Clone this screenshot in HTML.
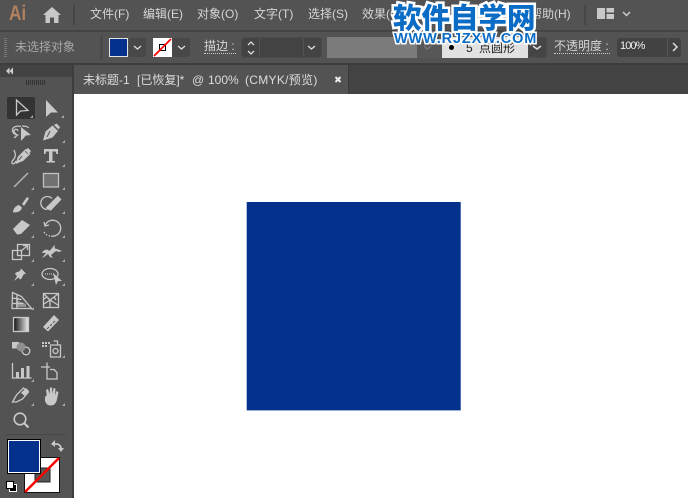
<!DOCTYPE html>
<html><head><meta charset="utf-8"><style>
html,body{margin:0;padding:0}
#p{position:relative;width:688px;height:498px;overflow:hidden;background:#535353;font-family:"Liberation Sans","Noto Sans CJK SC",sans-serif;font-size:12px;color:#d6d6d6}
#p div{position:absolute}
.t{white-space:nowrap;line-height:16px}
svg{position:absolute;left:0;top:0}
</style></head><body><div id="p">
<div style="left:0;top:30px;width:688px;height:2px;background:#444"></div>
<div style="left:0;top:63px;width:688px;height:2px;background:#3d3d3d"></div>
<div style="left:72px;top:65px;width:616px;height:29px;background:#434343"></div>
<div style="left:72px;top:65px;width:2px;height:433px;background:#3d3d3d"></div>
<div style="left:74px;top:65px;width:274px;height:29px;background:#535353"></div>
<div style="left:348px;top:65px;width:1px;height:29px;background:#3a3a3a"></div>
<div style="left:0;top:65px;width:72px;height:12px;background:#434343"></div>
<div style="left:74px;top:94px;width:614px;height:404px;background:#fff"></div>

<div class="t" style="left:9px;top:1px;font-size:21px;line-height:26px;color:#b0805f;font-weight:bold;transform:scaleX(.82);transform-origin:left top">Ai</div>
<div class="t" style="left:90px;top:6px">文件(F)</div>
<div class="t" style="left:143px;top:6px">编辑(E)</div>
<div class="t" style="left:197px;top:6px">对象(O)</div>
<div class="t" style="left:254px;top:6px">文字(T)</div>
<div class="t" style="left:308px;top:6px">选择(S)</div>
<div class="t" style="left:362px;top:6px">效果(C)</div>
<div class="t" style="left:530px;top:6px">帮助(H)</div>
<div class="t" style="left:15px;top:39px;color:#a8a8a8">未选择对象</div>
<div class="t" style="left:204px;top:39px;border-bottom:1px dotted #ccc;line-height:14px;padding-right:1px">描边 :</div>
<div style="left:327px;top:37px;width:90px;height:21px;background:#7b7b7b"></div>
<div style="left:442px;top:37px;width:86px;height:21px;background:#e1e1e1"></div>
<div class="t" style="left:466px;top:40px;color:#222">5</div>
<div class="t" style="left:479px;top:40px;color:#222">点圆形</div>
<div style="left:449px;top:45px;width:5px;height:5px;border-radius:50%;background:#000"></div>
<div class="t" style="left:554px;top:39px;border-bottom:1px dotted #ccc;line-height:14px;padding-right:1px">不透明度 :</div>
<div style="left:617px;top:38px;width:64px;height:19px;background:#424242;border-radius:3px"></div>
<div class="t" style="left:620px;top:38px;font-size:11px;letter-spacing:-.9px;color:#eee">100%</div>
<div class="t" style="left:83px;top:72px;color:#dcdcdc">未标题-1</div>
<div class="t" style="left:137px;top:72px;color:#dcdcdc">[已恢复]*</div>
<div class="t" style="left:192px;top:72px;color:#dcdcdc">@</div>
<div class="t" style="left:208px;top:72px;color:#dcdcdc">100%</div>
<div class="t" style="left:245px;top:72px;color:#dcdcdc;letter-spacing:.3px">(CMYK/预览)</div>

<svg width="688" height="498" viewBox="0 0 688 498" fill="none">
<rect x="246.700" y="202" width="214" height="208.400" fill="#03318c"/>
<!-- top bar -->
<path d="M43 15 52 7l9 8h-2.500v8h-4.500v-5.500h-4V23h-4.500v-8z" fill="#c8c8c8"/>
<path d="M74 5v20M585 5v20" stroke="#464646" stroke-width="2"/>
<path d="M597 8h8v11h-8z" fill="#c9c9c9"/><path d="M606.500 8h7.500v4.500h-7.500zM606.500 14h7.500v5h-7.500z" fill="#c9c9c9"/>
<path d="M623 12l3.500 3.500L630 12" stroke="#ccc" stroke-width="1.500"/>
<!-- control bar -->
<path d="M5.500 38v20" stroke="#777" stroke-width="3" stroke-dasharray="1 1"/>
<path d="M101.500 35v25" stroke="#464646" stroke-width="2"/>
<rect x="129" y="38" width="17" height="19" rx="2" fill="#484848"/>
<rect x="109.500" y="38.500" width="18" height="18" fill="#03318c" stroke="#e5e5e5"/>
<path d="M134 46l3.500 3 3.500-3" stroke="#ddd" stroke-width="1.300"/>
<rect x="172" y="38" width="18" height="19" rx="2" fill="#484848"/>
<rect x="153" y="38" width="19" height="19" fill="#fff"/>
<rect x="159.500" y="44.500" width="6" height="6" stroke="#000"/>
<path d="M154 56l17-17" stroke="#f00" stroke-width="1.800"/>
<path d="M178 46l3.500 3 3.500-3" stroke="#ddd" stroke-width="1.300"/>
<rect x="241.500" y="37.500" width="80" height="20" rx="3" fill="#434343" stroke="#4c4c4c"/>
<path d="M259.500 38v19M303.500 38v19" stroke="#535353"/>
<path d="M248 45l3-3 3 3M248 51l3 3 3-3" stroke="#ddd" stroke-width="1.300"/>
<path d="M308 46l3.500 3 3.500-3" stroke="#ddd" stroke-width="1.300"/>
<rect x="417" y="37" width="25" height="21" fill="#575757"/>
<path d="M424 46l3.500 3 3.500-3" stroke="#777" stroke-width="1.300"/>
<rect x="528.500" y="37.500" width="18" height="20" rx="2" fill="#454545" stroke="#4c4c4c"/>
<path d="M533 46l4 3 4-3" stroke="#ddd" stroke-width="1.500"/>
<path d="M667.500 38v19" stroke="#555"/>
<path d="M673 43l4 4-4 4" stroke="#ddd" stroke-width="1.500"/>
<!-- tab / panel -->
<path d="M335.500 77l5 5M340.500 77l-5 5" stroke="#eee" stroke-width="2"/>
<path d="M9.500 67.500l-3.500 3.500 3.500 3.500zM13 67.500l-3.500 3.500 3.500 3.500z" fill="#d0d0d0"/>
<path d="M26.500 80v5M28.500 80v5M30.500 80v5M32.500 80v5M34.500 80v5M36.500 80v5M38.500 80v5M40.500 80v5M42.500 80v5M44.500 80v5" stroke="#333"/>

<rect x="7" y="97" width="28" height="22" rx="2" fill="#333"/>
<defs><linearGradient id="g"><stop offset="0" stop-color="#111"/><stop offset="1" stop-color="#eee"/></linearGradient></defs>

<!-- outline icons -->
<g stroke="#c8c8c8" stroke-width="1.300" fill="none">
<path d="M16.500 100v15l4-4 7.500-.5z"/>
<path d="M21 126.500c-4-1-8.500 0-8.500 3.500 0 3 2.500 5 6 5M22 126c3 0 6 .5 6.500 2M18 131a2 2 0 1 0-3 2c1 1 2 2 1 3.500-1 1-2 1-2 1"/>
<path d="M14 150c1 3 2 4 1 7-1 3-4 4-3 6 1 2 3 0 4-2"/>
<path d="M16.500 163l2-6 7-7 4 4-7 6.500z"/>
<rect x="43.500" y="173.500" width="15" height="13.500" fill="#717171" stroke="#c0c0c0"/>
<path d="M47 209.500a6.500 6.500 0 1 1 5-11"/>
<path d="M44 222l1 4 4-1M45 226a8 8 0 1 1 6 10" />
<path d="M44 232c2 3 4 4 7 4" stroke-dasharray="1.500 1.500"/>
<rect x="12.500" y="250.500" width="9" height="9"/>
<rect x="17.500" y="244.500" width="12" height="11"/>
<path d="M21 251l6-5M23 245.500h4.500v4.500"/>
<ellipse cx="50" cy="274" rx="8" ry="5.500"/>
<path d="M45 274h9" stroke-dasharray="1 1"/>
<path d="M12.500 292.500l9 4 10 12h-19.500zM12.500 298l9 1.500M12.500 303.500h11M17 295v13"/>
<rect x="43.500" y="293.500" width="15" height="14"/>
<path d="M44 294l6 6 8-6M50 300v7M44 304l6-4 8 5M47 297l-3 2M54 297l2 3"/>
<rect x="13.500" y="317.500" width="15" height="14" fill="url(#g)" stroke="#c8c8c8"/>
<circle cx="26" cy="351" r="3.800"/>
<path d="M50.500 345h10v12h-10zM53.500 341h4v4"/>
<circle cx="55.500" cy="351" r="2.500"/>
<path d="M12.500 363v15h19"/>
<path d="M41 367h9M47 362.500v8M50 369.500h4l3 3v6.500h-10v-9"/>
<path d="M12.500 402l4-7 7-7 5 4-6 7-6 3z"/>
<circle cx="20" cy="419" r="5.800" stroke-width="1.600"/>
</g>
<path d="M14 187l14-14" stroke="#b5b5b5" stroke-width="1.500"/>
<path d="M24 423l4.500 4.500" stroke="#c8c8c8" stroke-width="2.200"/>

<!-- filled icons -->
<g fill="#c8c8c8">
<path d="M46 100v17l5-4.500h7z"/>
<path d="M21 127l10 8-5 .5-5 5.500z"/>
<path d="M43 140.500l2.500-9 7-6 5.500 5.500-5.500 6.500z"/>
<path d="M54 125l2.500-1.500 3.500 3.500-1.500 2.500z"/>
<path d="M17 162l2-5 5-6 5 4-6 6z"/>
<path d="M25 150l3-2 3 3-2 3z"/>
<path d="M44 149h14v5h-1.500l-1-2.500h-3v9.500h2.500v1.500h-8.500V161H49v-9.500h-3l-.5 2.500H44z"/>
<path d="M22 204l5-7 2 1.500-5 7.500z"/>
<path d="M13 212.500c0-4 3-7 6-7.500l3 2.500c-1 4-4 5-9 5z"/>
<path d="M48 208l11-11 2.500 2.500-11 11.500z"/>
<path d="M13 229l9-9 8 5-9 9-4 .5z"/>
<path d="M42 253c2-4 6-4 7-2 3-2 4-5 6-6-1 3 0 4 2 4l5 2-3 1-3-1-5 4 2 3-3-1-2-3-4 3-2 1 4-5z"/>
<path d="M21 268.500l5 5-2.500 1-2 4-1.500 1-1.500-2-4.500 3.500 3-5-2-2 1-1.500 4-1.500z"/>
<path d="M53 273l9 8-4 0-2 4z"/>
<path d="M16 300l10 4v3h-10zM16 297l4 2v1h-4z" opacity=".55"/>
<path d="M43 327l11-12 5 5-11 11.500z"/>
<path d="M12 342h7v6.500h-7z"/>
<circle cx="21" cy="347" r="4.500" fill="#909090"/>
<path d="M42 342h2v2h-2zM45 342h2v2h-2zM48 342h2v2h-2zM42 345h2v2h-2zM45 345h2v2h-2z"/>
<path d="M16 372h3v6h-3zM21 368h3v10h-3zM26.500 366h3v12h-3z"/>
<path d="M21 393l5-5 3 3-4 5z"/>
<path d="M45 397l2-2v2l-1-7 2-1 1.500 5 .5-6.500h2l.5 6.500 1-6 2 .5-.5 7 1.500-4.500 2 1-1.500 7.500c-1 4-3 6-6 6-4 0-5-2-6-4.500z"/>
</g>
<path d="M47 209l12-12" stroke="#c8c8c8" stroke-width="3.500"/>
<path d="M47 329l2-2M50 326l2-2M53 323l2-2" stroke="#535353"/>
<path d="M50 131l-3 6" stroke="#535353"/>
<path d="M22 156l-3 4" stroke="#535353"/>

<!-- corner triangles -->
<g fill="#a8a8a8">
<path d="M33 115v3h-3zM64 115v3h-3zM65 140v3h-3zM65 164v3h-3zM34 187v3h-3zM65 187v3h-3zM34 211v3h-3zM65 211v3h-3zM34 235v3h-3zM65 235v3h-3zM34 259v3h-3zM65 259v3h-3zM34 283v3h-3zM65 283v3h-3zM34 307v3h-3zM65 355v3h-3zM34 379v3h-3zM34 403v3h-3zM65 403v3h-3z"/>
</g>
<path d="M6 434.500h60" stroke="#484848"/>
<!-- stroke swatch -->
<rect x="24.500" y="457.500" width="35" height="35" fill="#fff" stroke="#111"/>
<rect x="35" y="468" width="15" height="14" fill="#555" stroke="#222"/>
<path d="M25 492l34-34" stroke="#f00" stroke-width="2.500"/>
<!-- fill swatch -->
<rect x="7.500" y="439.500" width="33" height="34" fill="#03318c" stroke="#000"/>
<rect x="8.500" y="440.500" width="31" height="32" stroke="#fff"/>
<!-- swap -->
<path d="M53 444h3c3 0 5 2 5 5" stroke="#c8c8c8" stroke-width="1.800"/>
<path d="M55 440l-4 4 4 3zM58 448h6l-3 4z" fill="#c8c8c8"/>
<!-- default -->
<rect x="9.500" y="484.500" width="7" height="7" fill="#000" stroke="#fff"/>
<rect x="6.500" y="481.500" width="7" height="7" fill="#fff" stroke="#000"/>
</svg>

<div class="t" style="left:393px;top:0;font-size:28.500px;line-height:33px;font-weight:900;color:#0a6cc4;-webkit-text-stroke:5px #fff;paint-order:stroke fill;font-family:'Noto Sans CJK SC',sans-serif">软件自学网</div>
<div class="t" style="left:394px;top:31px;font-size:14.500px;line-height:16px;font-weight:bold;letter-spacing:.850px;color:#0a6cc4;-webkit-text-stroke:3px #fff;paint-order:stroke fill">WWW.RJZXW.COM</div>
</div></body></html>
